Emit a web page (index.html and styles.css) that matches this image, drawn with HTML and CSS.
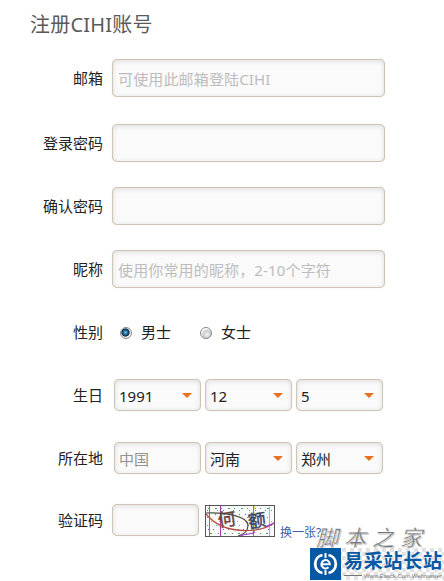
FILE: index.html
```html
<!DOCTYPE html>
<html lang="zh-CN">
<head>
    <meta charset="UTF-8">
    <meta name="viewport" content="width=device-width, initial-scale=1.0">
    <title>注册CIHI账号</title>
    <link rel="stylesheet" href="styles.css">
</head>
<body>
    <h1>注册CIHI账号</h1>
    <form class="register">
        <div class="row row-first">
            <label class="name" for="email">邮箱</label>
            <input id="email" type="text" class="text" placeholder="可使用此邮箱登陆CIHI">
        </div>
        <div class="row">
            <label class="name" for="password">登录密码</label>
            <input id="password" type="password" class="text">
        </div>
        <div class="row">
            <label class="name" for="confirm">确认密码</label>
            <input id="confirm" type="password" class="text">
        </div>
        <div class="row">
            <label class="name" for="nickname">昵称</label>
            <input id="nickname" type="text" class="text" placeholder="使用你常用的昵称，2-10个字符">
        </div>
        <div class="row">
            <span class="name">性别</span>
            <label class="radio"><input type="radio" name="sex" checked>男士</label>
            <label class="radio"><input type="radio" name="sex">女士</label>
        </div>
        <div class="row">
            <span class="name">生日</span>
            <div class="selects">
                <div class="select">1991<i class="arrow"></i></div>
                <div class="select">12<i class="arrow"></i></div>
                <div class="select">5<i class="arrow"></i></div>
            </div>
        </div>
        <div class="row row-place">
            <span class="name">所在地</span>
            <div class="selects">
                <div class="select disabled">中国</div>
                <div class="select">河南<i class="arrow"></i></div>
                <div class="select">郑州<i class="arrow"></i></div>
            </div>
        </div>
        <div class="row">
            <label class="name" for="code">验证码</label>
            <input id="code" type="text" class="text code">
            <svg class="captcha" width="70" height="32" viewBox="0 0 70 32">
                <rect x=".5" y=".5" width="69" height="31" fill="#fbfafc" stroke="#555"/>
                <g fill="none" stroke-width="1.200">
                    <path d="M3 3.500H68" stroke="#3aa655" stroke-dasharray="1 6 2 4"/>
                    <path d="M2 5.500H68" stroke="#c050d0" stroke-dasharray="1 9 1 5"/>
                    <path d="M4 9.500H68" stroke="#4a70e0" stroke-dasharray="1 5 1 8"/>
                    <path d="M2 12.500H68" stroke="#e05a70" stroke-dasharray="1 11 1 7"/>
                    <path d="M6 16.500H68" stroke="#e0a030" stroke-dasharray="1 7 1 4"/>
                    <path d="M2 20.500H68" stroke="#49b7b0" stroke-dasharray="1 8 1 6"/>
                    <path d="M3 24.500H68" stroke="#8a45d0" stroke-dasharray="1 4 1 9"/>
                    <path d="M5 28.500H68" stroke="#45a040" stroke-dasharray="2 6 1 5"/>
                </g>
                <g fill="none" stroke-width="1">
                    <path d="M4.500 1V31" stroke="#d65050"/>
                    <path d="M15.500 1V31" stroke="#a03ab0"/>
                    <path d="M48.500 1V31" stroke="#b05cc8"/>
                    <path d="M49.500 1V31" stroke="#d8e060" stroke-dasharray="3 3"/>
                    <path d="M64.500 2V31" stroke="#c9b070"/>
                </g>
                <text class="captcha-char brown" x="13" y="21" transform="rotate(-8 21 16)">何</text>
                <text class="captcha-char navy" x="43" y="22" transform="rotate(-8 52 16)">额</text>
                <g fill="none">
                    <path d="M1 8C22 7 43 12 43 20C43 27 37 30 33 31" stroke="#4d4d42" stroke-width="1.200"/>
                    <path d="M1 9C10 20 25 26 43 25.500C56 25 64 22 69 18" stroke="#b5523e" stroke-width="1.200"/>
                    <path d="M35 31C42 28 46 30 50 27M60 22L69 18" stroke="#a33cd2" stroke-width="1.200"/>
                </g>
            </svg>
            <a class="change">换一张?</a>
        </div>
    </form>

    <div class="watermark">
        <svg width="134" height="57" viewBox="0 0 134 57">
            <defs>
                <pattern id="checks" width="8" height="8" patternUnits="userSpaceOnUse">
                    <rect width="8" height="8" fill="#fff"/>
                    <path d="M0 0h4v4h-4zM4 4h4v4h-4z" fill="#e2e2e2"/>
                </pattern>
            </defs>
            <g class="brush">
                <text class="brush-light" x="7" y="23" textLength="106">脚本之家</text>
                <text class="brush-dark" x="6" y="22" textLength="106">脚本之家</text>
            </g>
            <rect x="30" y="24" width="104" height="32" fill="url(#checks)"/>
            <rect y="24" width="31" height="32" fill="#0758a5"/>
            <g fill="none" stroke="#fff">
                <path d="M12.500 31A9.200 9.200 0 0 0 12.500 49M18.500 31A9.200 9.200 0 0 1 18.500 49" stroke-width="2.800"/>
                <path d="M11.500 40.300H19.800A4.200 4.200 0 1 0 18.500 43.300" stroke-width="2"/>
                <path d="M15.500 29V34M15.500 46V51" stroke-width="2"/>
            </g>
            <text class="site" x="34" y="44" textLength="98">易采站长站</text>
            <path d="M34 51.500H52" stroke="#777"/>
            <text class="url" x="54" y="54" textLength="78" lengthAdjust="spacingAndGlyphs">Www.Easck.Com Webmaster</text>
        </svg>
    </div>
</body>
</html>
```
FILE: styles.css
```css
body {
    position: relative;
    height: 581px;
    margin: 0;
    overflow: hidden;
    background: #fff;
    color: #222;
    font-family: "Noto Sans", "Noto Sans CJK SC", sans-serif;
    font-size: 15px;
}

h1 {
    margin: 0;
    padding: 10px 0 0 30px;
    color: #5a5a5a;
    font-size: 20px;
    font-weight: normal;
    letter-spacing: 0.2px;
    line-height: 30px;
}

.register {
    padding-top: 19px;
}

.row {
    display: flex;
    align-items: center;
    height: 38px;
    margin-bottom: 25px;
}

.row-first {
    margin-bottom: 27px;
}

.row-place {
    margin-bottom: 24px;
}

.name {
    width: 103px;
    margin-right: 9px;
    text-align: right;
    line-height: 20px;
}

.text,
.select {
    box-sizing: border-box;
    border: 1px solid #cec5b5;
    border-radius: 5px;
    background: #fafafa;
    box-shadow: inset 0 1px 5px rgba(0, 0, 0, 0.12), 0 0 1px #ddd5c8;
}

.text {
    width: 273px;
    height: 38px;
    padding: 1px 5px 0;
    font: inherit;
    letter-spacing: 0.15px;
    outline: none;
}

.text::placeholder {
    color: #bdbdbd;
}

.code {
    width: 87px;
    height: 32px;
}

.radio {
    display: flex;
    align-items: center;
    width: 80px;
    line-height: 20px;
}

.radio input {
    appearance: none;
    box-sizing: border-box;
    width: 12px;
    height: 12px;
    margin: 1px 9px 0 8px;
    border: 1px solid #858585;
    border-radius: 50%;
    background: radial-gradient(circle at 60% 65%, #f4f4f4 0, #c9cccf 45%, #fff 65%);
}

.radio input:checked {
    background: radial-gradient(circle at 45% 45%, #6cc8f0 0, #1b5f8c 30%, #0e2c46 48%, #f4f4f4 58%);
}

.selects {
    display: flex;
    gap: 4px;
    margin-left: 2px;
}

.select {
    display: flex;
    align-items: center;
    justify-content: space-between;
    width: 87px;
    height: 32px;
    padding: 1px 8px 0 4px;
    line-height: 20px;
}

.disabled {
    color: #929292;
}

.arrow {
    margin-bottom: 1px;
    border: 5px solid transparent;
    border-top-color: #e87022;
    border-bottom: 0;
}

.captcha {
    margin: 2px 0 0 6px;
}

.captcha-char {
    font-size: 18px;
}

.brown {
    fill: #67443b;
    stroke: #67443b;
    stroke-width: 0.4px;
}

.navy {
    fill: #354262;
    stroke: #354262;
    stroke-width: 0.4px;
}

.change {
    margin: 26px 0 0 5px;
    color: #3a60a5;
    font-size: 12px;
    line-height: 18px;
}

.watermark {
    position: absolute;
    left: 310px;
    top: 524px;
    line-height: 0;
}

.brush {
    font-family: "Noto Sans CJK SC", sans-serif;
    font-size: 22px;
    font-style: italic;
}

.brush-light {
    fill: #c8c8c8;
}

.brush-dark {
    fill: #777;
    stroke: #fff;
    stroke-width: 0.3px;
}

.site {
    fill: #0758a5;
    font-size: 19px;
    font-weight: bold;
}

.url {
    fill: #777;
    font-family: "Liberation Sans", sans-serif;
    font-size: 6px;
}
```
